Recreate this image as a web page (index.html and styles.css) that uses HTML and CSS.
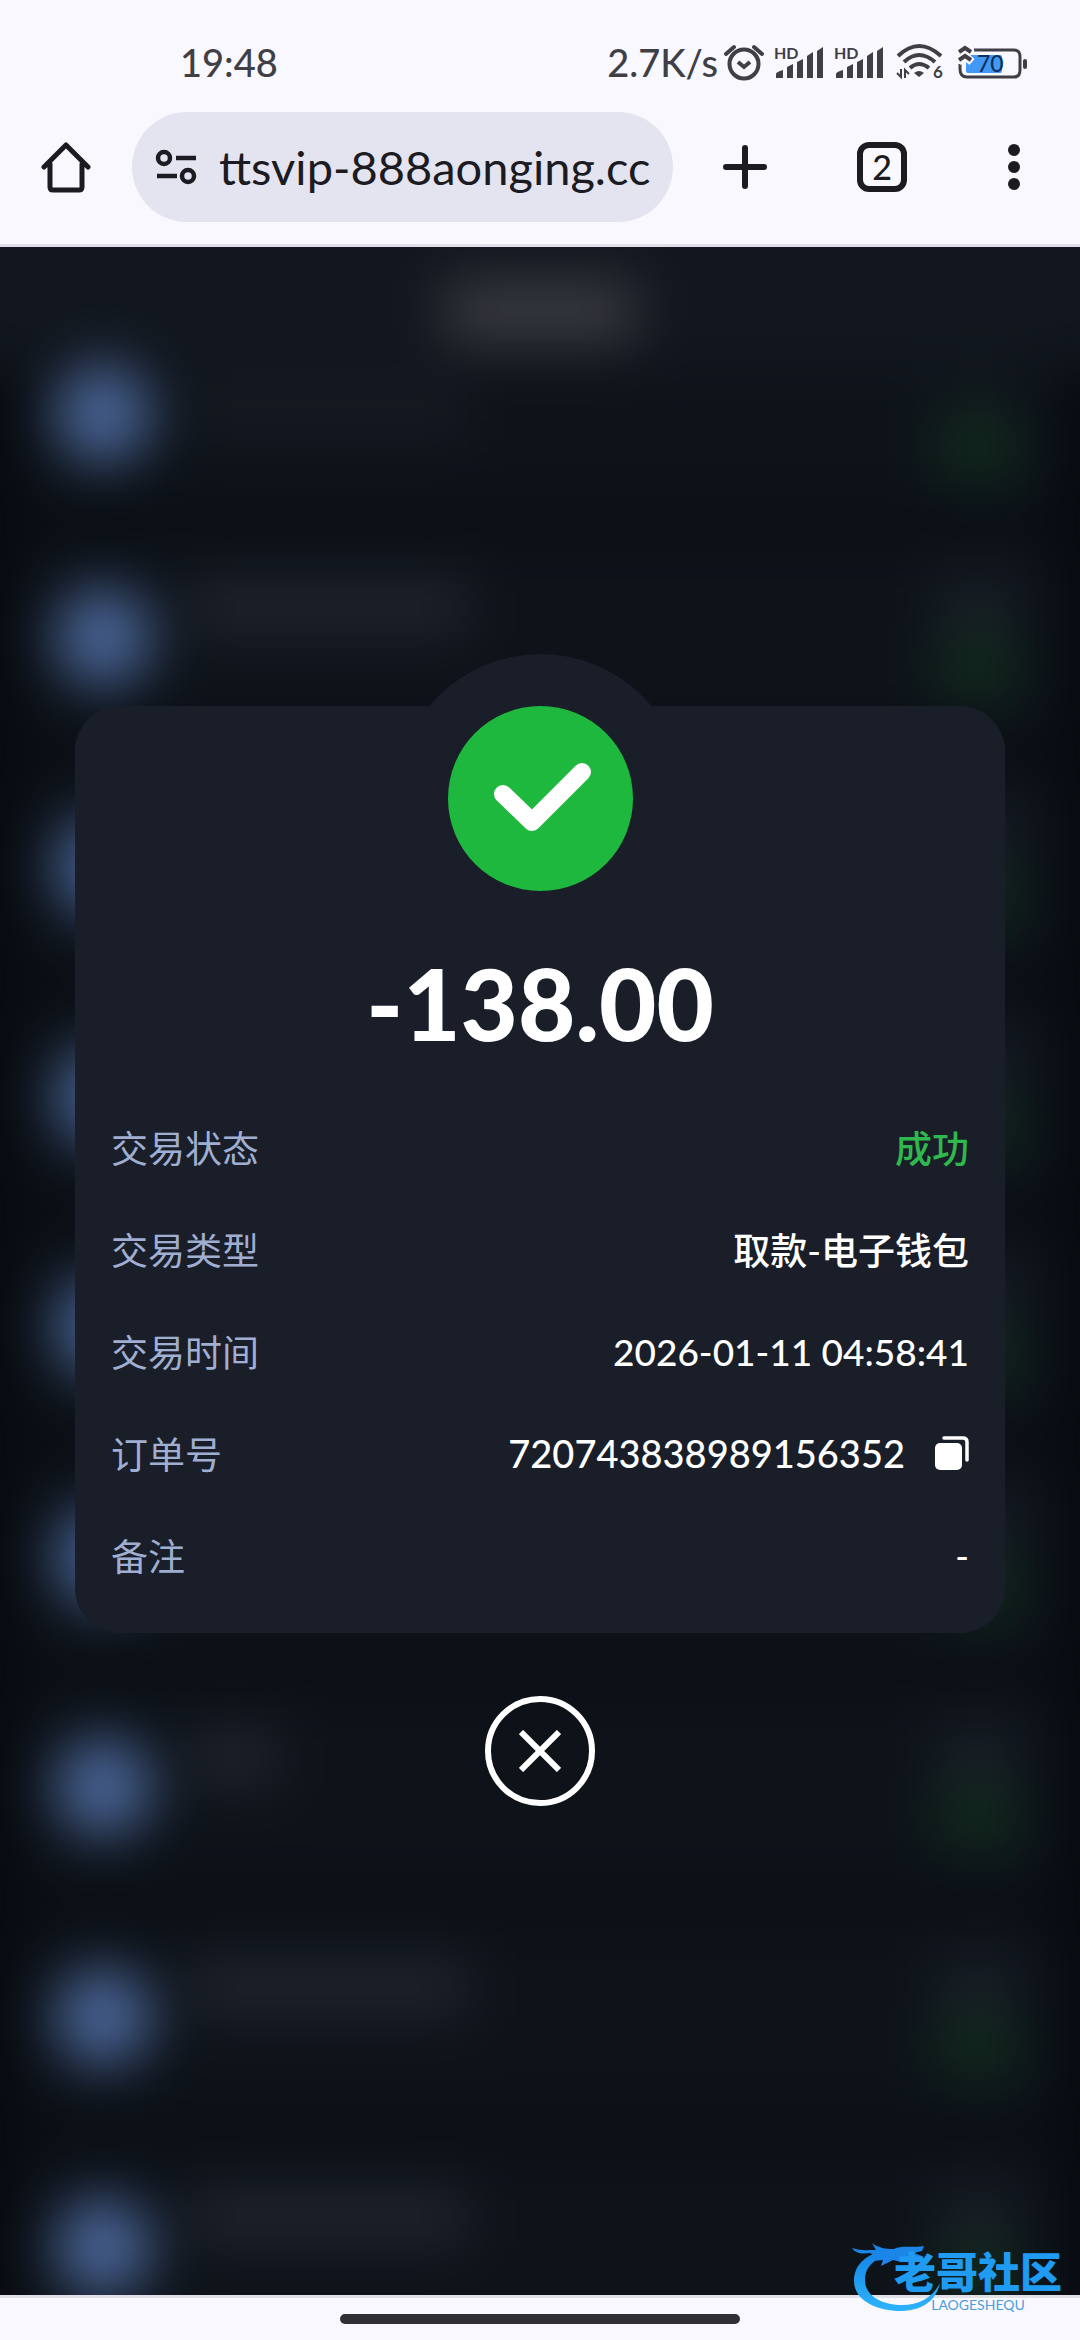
FILE: index.html
```
<!DOCTYPE html>
<html lang="zh-CN">

<head>
  <meta charset="UTF-8" />
  <meta name="viewport" content="width=device-width, initial-scale=1.0" />
  <title>交易详情</title>
  <link rel="stylesheet" href="styles.css">
</head>

<body>
  <header class="status-bar">
    <span class="clock">19:48</span>
    <div class="status-icons">
      <span class="speed">2.7K/s</span>
      <svg class="alarm" width="40" height="38" viewBox="0 0 40 38" fill="none" stroke="#403f46" stroke-width="4">
        <circle cx="20" cy="21" r="14.5" />
        <path d="M14 19l6 5 6-5" />
        <path d="M2 11l8-7M38 11l-8-7" stroke-width="4" stroke-linecap="round" />
      </svg>
      <svg class="signal" width="50" height="38" viewBox="0 0 50 38" fill="#403f46">
        <text x="0" y="16" class="hd">HD</text>
        <path d="M2 35v-4q0-2 7-4v8zM13 35V24l6-3v14zM23 35V19l6-3v19zM33 35V13l6-4v26zM43 35V8l6-4v31z" />
      </svg>
      <svg class="signal" width="50" height="38" viewBox="0 0 50 38" fill="#403f46">
        <text x="0" y="16" class="hd">HD</text>
        <path d="M2 35v-4q0-2 7-4v8zM13 35V24l6-3v14zM23 35V19l6-3v19zM33 35V13l6-4v26zM43 35V8l6-4v31z" />
      </svg>
      <svg class="wifi" width="48" height="40" viewBox="0 0 48 40" fill="none" stroke="#403f46" stroke-width="4">
        <path d="M2 14q21-20 43 0M8 20q15-14 31 0M14 26q9-8 19 0" />
        <path d="M18 31q5-4 10 0l-5 4z" fill="#403f46" stroke="none" />
        <path d="M5 27v8l-4-4M9 36v-8l4 4" stroke-width="2" />
        <text x="37" y="36" class="wifi-gen">6</text>
      </svg>
      <svg class="battery" width="70" height="36" viewBox="0 0 70 36" fill="none">
        <rect x="8" y="11" width="36" height="18" rx="2" fill="#4397f5" />
        <path d="M16 6h40q6 0 6 7v13q0 7-6 7H9q-7 0-7-8v-5" stroke="#403f46" stroke-width="3" />
        <path d="M0 10l7-6 7 6M0 18l7-6 7 6" stroke="#f9f8ff" stroke-width="8" />
        <path d="M1 8l6-4 6 4M1 16l6-4 6 4" stroke="#403f46" stroke-width="4" />
        <rect x="65" y="15" width="4" height="10" rx="2" fill="#403f46" />
        <text x="19" y="28" class="level">70</text>
      </svg>
    </div>
  </header>

  <nav class="toolbar">
    <button class="tool home" aria-label="主页">
      <svg width="50" height="52" viewBox="0 0 50 52" fill="none" stroke="#1b1b21" stroke-width="5" stroke-linejoin="round" stroke-linecap="round">
        <path d="M3 26L25 4l22 22M9 23v23q0 3 3 3h26q3 0 3-3V23" />
      </svg>
    </button>
    <div class="address">
      <svg width="42" height="36" viewBox="0 0 42 36" fill="none" stroke="#1b1b21" stroke-width="4.5">
        <circle cx="9" cy="9" r="6" />
        <path d="M21 9h20M2 27h20" />
        <circle cx="33" cy="27" r="6" />
      </svg>
      <input type="text" class="url" value="ttsvip-888aonging.cc" aria-label="网址">
    </div>
    <button class="tool new-tab" aria-label="新标签页">
      <svg width="44" height="44" viewBox="0 0 44 44" stroke="#1b1b21" stroke-width="6" stroke-linecap="round">
        <path d="M22 3v38M3 22h38" />
      </svg>
    </button>
    <button class="tool tabs" aria-label="标签页"><span class="tab-count">2</span></button>
    <button class="tool menu" aria-label="菜单">
      <svg width="12" height="46" viewBox="0 0 12 46" fill="#1b1b21">
        <circle cx="6" cy="6" r="6" />
        <circle cx="6" cy="23" r="6" />
        <circle cx="6" cy="40" r="6" />
      </svg>
    </button>
  </nav>

  <main class="page">
    <!-- transaction list behind the dialog -->
    <div class="backdrop" aria-hidden="true">
      <div class="list-header"><div class="list-title"></div></div>
      <div class="item first"><i class="coin"></i><i class="name"></i><i class="sum"></i></div>
      <div class="item"><i class="coin"></i><i class="name"></i><i class="sum"></i></div>
      <div class="item"><i class="coin"></i><i class="name"></i><i class="sum"></i></div>
      <div class="item"><i class="coin"></i><i class="name"></i><i class="sum"></i></div>
      <div class="item"><i class="coin"></i><i class="name"></i><i class="sum"></i></div>
      <div class="item"><i class="coin"></i><i class="name"></i><i class="sum"></i></div>
      <div class="item"><i class="coin"></i><i class="name short"></i><i class="sum"></i></div>
      <div class="item"><i class="coin"></i><i class="name"></i><i class="sum"></i></div>
      <div class="item"><i class="coin"></i><i class="name"></i><i class="sum"></i></div>
    </div>

    <section class="dialog">
      <div class="result-icon">
        <svg width="185" height="185" viewBox="0 0 185 185">
          <circle cx="92.5" cy="92.5" r="92.5" fill="#1fb83f" />
          <path d="M55 88l29 28 50-50" fill="none" stroke="#fff" stroke-width="18" stroke-linecap="round" stroke-linejoin="round" />
        </svg>
      </div>
      <h1 class="amount">-138.00</h1>
      <dl class="details">
        <div class="row">
          <dt>交易状态</dt>
          <dd class="success">成功</dd>
        </div>
        <div class="row">
          <dt>交易类型</dt>
          <dd>取款-电子钱包</dd>
        </div>
        <div class="row">
          <dt>交易时间</dt>
          <dd>2026-01-11 04:58:41</dd>
        </div>
        <div class="row">
          <dt>订单号</dt>
          <dd class="order-no">720743838989156352
            <button class="copy" aria-label="复制">
              <svg width="34" height="34" viewBox="0 0 34 34">
                <rect x="0" y="7" width="27" height="27" rx="5" fill="#fff" />
                <path d="M9 2h19q4 0 4 4v18" fill="none" stroke="#fff" stroke-width="3.5" stroke-linecap="round" />
              </svg>
            </button>
          </dd>
        </div>
        <div class="row">
          <dt>备注</dt>
          <dd>-</dd>
        </div>
      </dl>
    </section>

    <button class="close" aria-label="关闭">
      <svg width="42" height="42" viewBox="0 0 42 42" stroke="#fff" stroke-width="6">
        <path d="M2 2l38 38M40 2L2 40" />
      </svg>
    </button>
  </main>

  <footer class="gesture-bar">
    <div class="gesture-pill"></div>
  </footer>

  <div class="watermark">
    <svg class="dragon" width="90" height="72" viewBox="0 0 90 72">
      <defs>
        <linearGradient id="blue" x1="0" y1="0" x2="0" y2="1">
          <stop offset="0" stop-color="#1583e6" />
          <stop offset="1" stop-color="#2db4fb" />
        </linearGradient>
      </defs>
      <path d="M36 9C14 12 2 24 2 40c0 20 24 30 46 30 22 0 36-10 40-28-7 14-20 22-38 22-20 0-37-9-37-25 0-14 10-22 27-26z" fill="url(#blue)" />
      <path d="M0 7c8 3 16 2 24 2l-4-7c6 5 14 6 22 6 8-4 14-1 30-3l-2 5-8 2 8 3-1 4-12-3-8 5-8-2-12 6 2-6-9 1 2-5-6-3c-7 1-14 1-18-5z" fill="#1b86e8" />
    </svg>
    <div class="brand">
      <span class="brand-name">老哥社区</span>
      <span class="brand-latin">LAOGESHEQU</span>
    </div>
  </div>
</body>

</html>
```

FILE: styles.css
```
* {
  box-sizing: border-box;
}

body {
  margin: 0;
  min-height: 100vh;
  display: flex;
  flex-direction: column;
  position: relative;
  background-color: #f9f8ff;
  color: #1b1b21;
  font-family: Lato, "Noto Sans CJK SC", sans-serif;
}

button {
  border: none;
  padding: 0;
  background: none;
  color: inherit;
  font-family: inherit;
  cursor: pointer;
}

svg {
  display: block;
  flex-shrink: 0;
}

/* phone status bar */
.status-bar {
  height: 112px;
  padding: 12px 52px 0 180px;
  display: flex;
  justify-content: space-between;
  align-items: center;
  color: #403f46;
  font-size: 38px;
}

.clock,
.speed {
  font-weight: 500;
}

.status-icons {
  display: flex;
  align-items: center;
}

.alarm {
  margin-left: 6px;
}

.signal {
  margin-left: 10px;
}

.wifi {
  margin-left: 12px;
}

.battery {
  margin-left: 14px;
}

.status-icons text {
  fill: #403f46;
  stroke: none;
  font-weight: 700;
}

.hd {
  font-size: 16px;
}

.wifi-gen {
  font-size: 17px;
}

.status-icons .level {
  font-size: 23px;
  font-weight: 500;
  fill: #12305c;
}

/* browser toolbar */
.toolbar {
  height: 135px;
  padding-bottom: 22px;
  display: flex;
  border-bottom: 3px solid #e1e0e8;
}

.tool {
  display: flex;
  justify-content: center;
  align-items: center;
}

.home {
  width: 132px;
}

.new-tab {
  width: 144px;
}

.tabs {
  width: 130px;
}

.menu {
  width: 133px;
}

.tab-count {
  width: 50px;
  height: 50px;
  border: 6px solid #1b1b21;
  border-radius: 12px;
  font-size: 34px;
  line-height: 38px;
  font-weight: 500;
}

.address {
  flex: 1;
  min-width: 0;
  padding: 0 16px 0 23px;
  display: flex;
  align-items: center;
  gap: 22px;
  border-radius: 55px;
  background-color: #e4e4f0;
}

.url {
  flex: 1;
  min-width: 0;
  padding: 0;
  border: none;
  outline: none;
  background: none;
  color: #1b1b21;
  font-family: inherit;
  font-size: 47px;
}

/* page with the dialog */
.page {
  flex: 1;
  position: relative;
  overflow: hidden;
  padding: 459px 75px 0;
  display: flex;
  flex-direction: column;
  align-items: center;
  background-color: #080b10;
}

.backdrop {
  position: absolute;
  inset: 0;
  filter: blur(27px);
}

.list-header {
  height: 122px;
  padding-top: 34px;
  background-color: #12171f;
  box-shadow: 0 -60px 0 60px #12171f;
}

.list-title {
  width: 190px;
  height: 60px;
  margin: 0 auto;
  background-color: #393b40;
}

.item {
  height: 205px;
  margin: 0 24px 25px;
  padding: 0 36px 0 30px;
  display: flex;
  align-items: center;
  background-color: #0e131a;
}

.item.first {
  height: 140px;
}

.coin {
  width: 98px;
  height: 98px;
  border-radius: 48px;
  background-color: #486393;
}

.item.first .coin {
  margin-bottom: 50px;
}

.name {
  width: 280px;
  height: 60px;
  margin: 0 auto 60px 36px;
  background-color: #1e222b;
}

.first .name {
  background-color: #151a22;
}

.name.short {
  width: 90px;
}

.sum {
  width: 84px;
  height: 130px;
  background: linear-gradient(#181d25 45%, #10271c 45%);
}

.first .sum {
  margin-bottom: 40px;
  background: linear-gradient(#10161c 45%, #10271c 45%);
}

.dialog {
  position: relative;
  width: 100%;
  padding: 0 36px 27px;
  border-radius: 45px;
  background-color: #191e29;
}

.result-icon {
  width: 289px;
  margin: -52px auto 0;
  padding: 52px;
  border-radius: 50%;
  background-color: #191e29;
}

.amount {
  margin: 0;
  color: #fff;
  text-align: center;
  font-size: 99px;
  line-height: 120px;
  font-weight: 900;
}

.details {
  margin: 33px 0 0;
}

.row {
  height: 102px;
  display: flex;
  justify-content: space-between;
  align-items: center;
  font-size: 37px;
}

dt {
  color: #a0aed2;
}

dd {
  margin: 0;
  display: flex;
  align-items: center;
  gap: 30px;
  color: #fff;
  font-weight: 500;
}

.order-no {
  font-size: 38px;
}

.success {
  color: #2fb84e;
}

.close {
  position: relative;
  width: 110px;
  height: 110px;
  margin: 63px 0;
  display: flex;
  justify-content: center;
  align-items: center;
  border: 6px solid #fff;
  border-radius: 50%;
}

.gesture-bar {
  height: 45px;
  display: flex;
  justify-content: center;
  align-items: center;
  border-top: 3px solid #e1e0e8;
}

.gesture-pill {
  width: 37%;
  height: 10px;
  border-radius: 5px;
  background-color: #303034;
}

/* site logo over the corner */
.watermark {
  position: absolute;
  right: 18px;
  bottom: 27px;
  display: flex;
  align-items: flex-end;
}

.brand {
  margin-left: -48px;
  display: flex;
  flex-direction: column;
  align-items: center;
}

.brand-name {
  font-size: 42px;
  line-height: 50px;
  font-weight: 900;
  color: #209bf2;
}

.brand-latin {
  font-size: 14px;
  line-height: 16px;
  color: #4a9ee0;
}
```
